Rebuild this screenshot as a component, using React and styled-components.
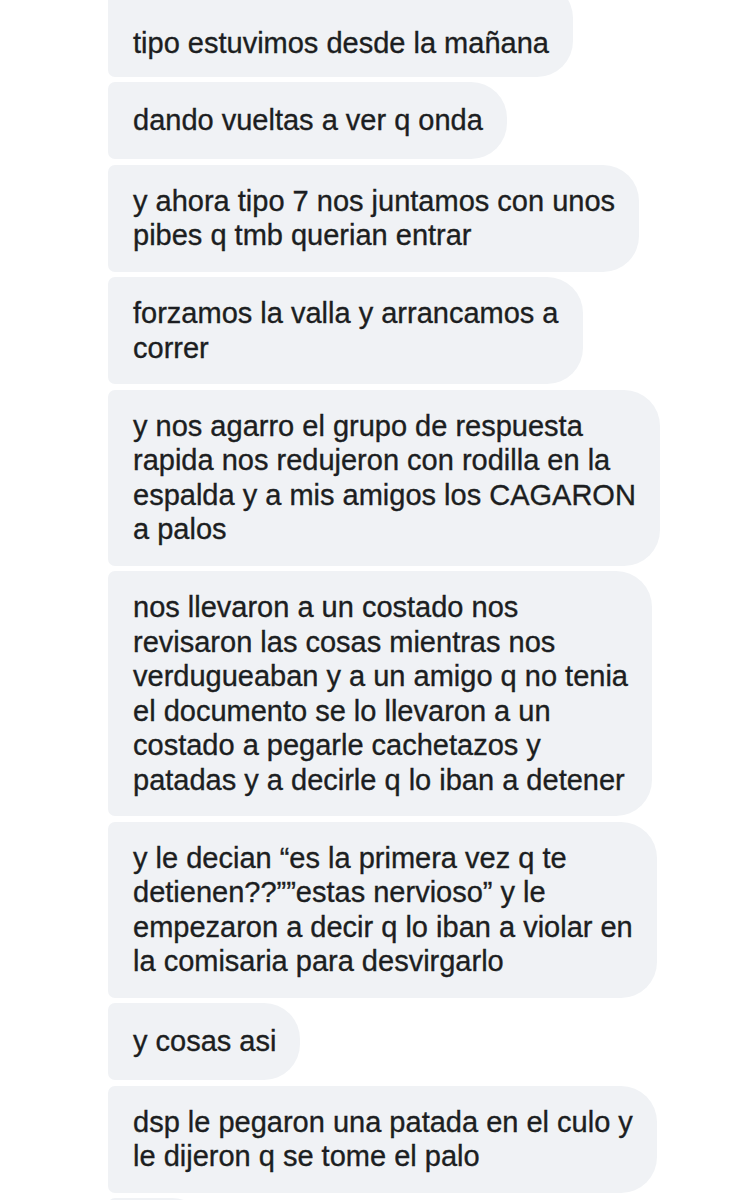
import React from "react";
import styled, { createGlobalStyle } from "styled-components";

const Global = createGlobalStyle`
  html, body { margin: 0; padding: 0; background: #ffffff; }
  body { font-family: "Liberation Sans", Arial, sans-serif; }
`;

const Thread = styled.div`
  display: flex;
  flex-direction: column;
  align-items: flex-start;
  gap: 5.5px;
  padding: 0 0 0 108px;
  height: 1200px;
  overflow: hidden;
`;

const Bubble = styled.div`
  box-sizing: border-box;
  flex-shrink: 0;
  display: flex;
  flex-direction: column;
  justify-content: center;
  min-height: 77px;
  width: ${(p) => (p.$stub ? "100px" : "auto")};
  padding: ${(p) => (p.$lead ? "44px 24px 16px 25px" : "19px 24px 19px 25px")};
  margin-top: ${(p) => (p.$lead ? "-18px" : "0")};
  background: #f0f2f5;
  border-radius: 7px 36px 36px 7px;
  color: #1c1e21;
  font-family: "Liberation Sans", Arial, sans-serif;
  font-size: 29px;
  line-height: 34.5px;
  -webkit-text-stroke: 0.35px #1c1e21;
`;

const Line = styled.span`
  display: block;
  white-space: nowrap;
`;

const messages = [
  ["tipo estuvimos desde la mañana"],
  ["dando vueltas a ver q onda"],
  ["y ahora tipo 7 nos juntamos con unos", "pibes q tmb querian entrar"],
  ["forzamos la valla y arrancamos a", "correr"],
  [
    "y nos agarro el grupo de respuesta",
    "rapida nos redujeron con rodilla en la",
    "espalda y a mis amigos los CAGARON",
    "a palos",
  ],
  [
    "nos llevaron a un costado nos",
    "revisaron las cosas mientras nos",
    "verdugueaban y a un amigo q no tenia",
    "el documento se lo llevaron a un",
    "costado a pegarle cachetazos y",
    "patadas y a decirle q lo iban a detener",
  ],
  [
    "y le decian \u201ces la primera vez q te",
    "detienen??\u201d\u201destas nervioso\u201d y le",
    "empezaron a decir q lo iban a violar en",
    "la comisaria para desvirgarlo",
  ],
  ["y cosas asi"],
  ["dsp le pegaron una patada en el culo y", "le dijeron q se tome el palo"],
  [],
];

export default function App() {
  return (
    <>
      <Global />
      <Thread>
        {messages.map((lines, i) => (
          <Bubble key={i} $lead={i === 0} $stub={lines.length === 0}>
            {lines.map((l, j) => (
              <Line key={j}>{l}</Line>
            ))}
          </Bubble>
        ))}
      </Thread>
    </>
  );
}
